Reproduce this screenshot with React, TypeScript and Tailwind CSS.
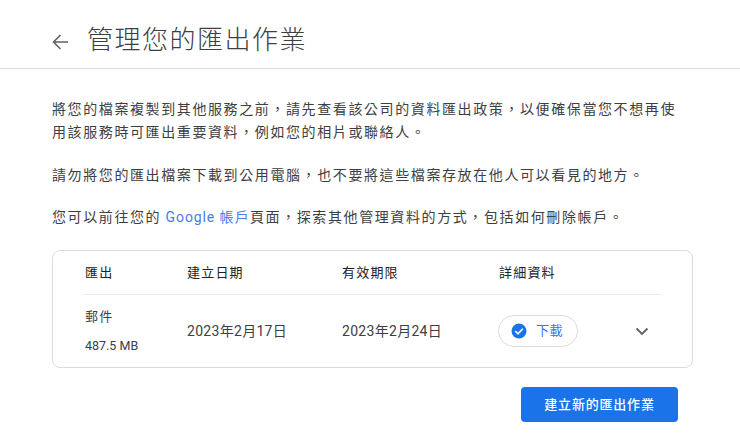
function Column({ className, children }: { className: string; children: React.ReactNode }) {
  return <div className={className}>{children}</div>;
}

export default function App() {
  return (
    <div className="h-[438px] w-[740px] overflow-hidden bg-white font-['Roboto','Noto_Sans_CJK_TC',sans-serif] text-[#3c4043]">
      <header className="flex h-[69px] items-center border-b border-[#dadce0] pt-[12px] pl-[52px]">
        <svg className="mt-[4px]" width="16" height="16" viewBox="0 0 16 16" fill="none" stroke="#5f6368" strokeWidth="1.6">
          <path d="M16 8H1.5M8.5 1 1.5 8l7 7" />
        </svg>
        <h1 className="ml-[19px] text-[26px] leading-[32px] font-light tracking-[1.5px] text-[#3c4043]">
          管理您的匯出作業
        </h1>
      </header>

      <main className="px-[52px] pt-[29px]">
        <p className="text-[14px] leading-[23px] tracking-[1.6px]">
          將您的檔案複製到其他服務之前，請先查看該公司的資料匯出政策，以便確保當您不想再使
          <br />
          用該服務時可匯出重要資料，例如您的相片或聯絡人。
        </p>
        <p className="mt-[20px] text-[14px] leading-[23px] tracking-[1.6px]">
          請勿將您的匯出檔案下載到公用電腦，也不要將這些檔案存放在他人可以看見的地方。
        </p>
        <p className="mt-[19px] text-[14px] leading-[23px] tracking-[1.6px]">
          您可以前往您的
          <span className="tracking-[0.9px] text-[#4a7be8]"> Google </span>
          <span className="tracking-[1.2px] text-[#4a7be8]">帳戶</span>
          頁面，探索其他管理資料的方式，包括如何刪除帳戶。
        </p>

        <section className="mt-[21px] h-[118px] w-[641px] rounded-lg border border-[#dadce0] px-[30px]">
          <div className="flex h-[44px] items-center border-b border-[#e8eaed] pl-[2px] text-[13px] tracking-[1.2px] text-[#202124]">
            <Column className="w-[102px]">匯出</Column>
            <Column className="w-[155px]">建立日期</Column>
            <Column className="w-[157px]">有效期限</Column>
            <Column>詳細資料</Column>
          </div>
          <div className="flex h-[72px] items-center pl-[2px] text-[14px]">
            <div className="w-[102px]">
              <div className="text-[13px] leading-[18px] tracking-[1.2px]">郵件</div>
              <div className="mt-[12px] text-[12.5px] leading-[16px]">487.5 MB</div>
            </div>
            <Column className="w-[155px] tracking-[0.3px] text-[#3c4043]">2023年2月17日</Column>
            <Column className="w-[156px] tracking-[0.3px] text-[#3c4043]">2023年2月24日</Column>
            <div className="flex h-[32px] w-[80px] items-center rounded-full border border-[#dadce0] pl-[12px] text-[13px] text-[#3f74e6]">
              <svg width="16" height="16" viewBox="0 0 16 16">
                <circle cx="8" cy="8" r="7.5" fill="#1a73e8" />
                <path d="M4.3 8.2 7 10.8l4.8-5" fill="none" stroke="#fff" strokeWidth="1.6" />
              </svg>
              <span className="ml-[9px] tracking-[0.5px]">下載</span>
            </div>
            <svg className="ml-[57px]" width="14" height="9" viewBox="0 0 14 9" fill="none" stroke="#5f6368" strokeWidth="1.8">
              <path d="m1.5 1.5 5.5 5.5 5.5-5.5" />
            </svg>
          </div>
        </section>

        <div className="mt-[19px] flex justify-end pr-[10px]">
          <button className="h-[35px] w-[157px] rounded bg-[#1a73e8] text-[13px] font-medium tracking-[0.8px] text-white">
            建立新的匯出作業
          </button>
        </div>
      </main>
    </div>
  );
}
